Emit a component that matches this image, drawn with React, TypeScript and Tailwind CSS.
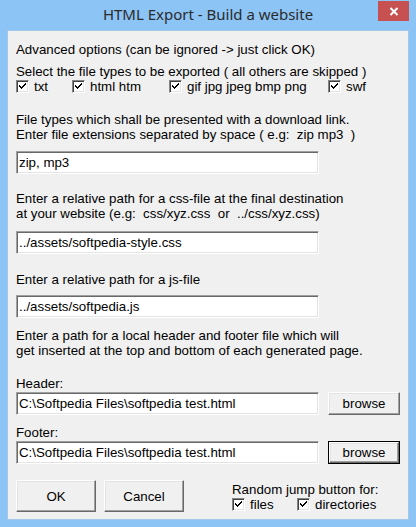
import React from 'react';

const font = { fontFamily: '"Liberation Sans", Arial, sans-serif' };

const Check: React.FC = () => (
  <span className="inline-flex w-[13px] h-[13px] shrink-0 bg-white border border-t-[#848484] border-l-[#848484] border-b-white border-r-white shadow-[inset_1px_1px_0_#404040,inset_-1px_-1px_0_#e3e3e3] items-center justify-center">
    <svg width="9" height="9" viewBox="0 0 9 9" shapeRendering="crispEdges">
      <path d="M1 3h1v1h1v1h1V4h1V3h1V2h1V1h1v2H7v1H6v1H5v1H4v1H3V6H2V5H1z" fill="#000" />
    </svg>
  </span>
);

const CheckItem: React.FC<{ label: string; className?: string }> = ({ label, className = '' }) => (
  <div className={`flex items-center gap-[5px] ${className}`}>
    <Check />
    <span>{label}</span>
  </div>
);

const Field: React.FC<{ value: string }> = ({ value }) => (
  <div className="w-[303px] h-[23px] bg-white border border-t-[#a0a0a0] border-l-[#a0a0a0] border-b-white border-r-white shadow-[inset_1px_1px_0_#696969,inset_-1px_-1px_0_#e3e3e3] flex items-center pl-[2px] whitespace-nowrap">
    {value}
  </div>
);

const WinButton: React.FC<{ label: string; className?: string; isDefault?: boolean }> = ({
  label,
  className = '',
  isDefault = false,
}) => (
  <div className={`${isDefault ? 'border border-[#000]' : ''} ${className}`}>
    <div className="w-full h-full bg-[#f0f0f0] border border-t-white border-l-white border-b-[#696969] border-r-[#696969] shadow-[inset_-1px_-1px_0_#a0a0a0,inset_1px_1px_0_#e3e3e3] flex items-center justify-center">
      {label}
    </div>
  </div>
);

export default function App() {
  return (
    <div className="w-[416px] h-[527px] bg-[#8cc4f5] flex flex-col overflow-hidden" style={font}>
      {/* title bar */}
      <div className="relative h-[30px] shrink-0 flex items-center justify-center">
        <span className="text-[15px] text-[#2b2b2b] pb-[1px]" style={{ fontFamily: '"Noto Sans", "Open Sans", sans-serif' }}>
          HTML Export - Build a website
        </span>
        <div className="absolute top-[1px] right-[7px] w-[31px] h-[20px] bg-[#c75050] flex items-center justify-center">
          <svg width="10" height="9" viewBox="0 0 10 9">
            <path d="M1.5 1 L8.5 8 M8.5 1 L1.5 8" stroke="#fff" strokeWidth="2" />
          </svg>
        </div>
      </div>

      {/* client area */}
      <div className="mx-[7px] mb-[7px] flex-1 bg-[#f0f0f0] border border-[#a3c7e8] pl-[8px] pt-[11px] text-[13.3px] leading-[15px] text-black">
        <div>Advanced options (can be ignored -&gt; just click OK)</div>

        <div className="mt-[7px]">Select the file types to be exported ( all others are skipped )</div>
        <div className="flex h-[15px] items-center">
          <CheckItem label="txt" className="w-[56px]" />
          <CheckItem label="html htm" className="w-[97px]" />
          <CheckItem label="gif jpg jpeg bmp png" className="w-[159px]" />
          <CheckItem label="swf" />
        </div>

        <div className="mt-[18px]">File types which shall be presented with a download link.</div>
        <div>Enter file extensions separated by space ( e.g:&nbsp; zip mp3&nbsp; )</div>
        <div className="mt-[9px]">
          <Field value="zip, mp3" />
        </div>

        <div className="mt-[17px]">Enter a relative path for a css-file at the final destination</div>
        <div>at your website (e.g:&nbsp; css/xyz.css&nbsp; or&nbsp; ../css/xyz.css)</div>
        <div className="mt-[10px]">
          <Field value="../assets/softpedia-style.css" />
        </div>

        <div className="mt-[18px]">Enter a relative path for a js-file</div>
        <div className="mt-[8px]">
          <Field value="../assets/softpedia.js" />
        </div>

        <div className="mt-[10px]">Enter a path for a local header and footer file which will</div>
        <div>get inserted at the top and bottom of each generated page.</div>

        <div className="mt-[18px]">Header:</div>
        <div className="flex items-start gap-[9px] mt-[1px]">
          <Field value="C:\Softpedia Files\softpedia test.html" />
          <WinButton label="browse" className="w-[72px] h-[23px]" />
        </div>

        <div className="mt-[10px]">Footer:</div>
        <div className="flex items-start gap-[9px] mt-[1px]">
          <Field value="C:\Softpedia Files\softpedia test.html" />
          <WinButton label="browse" className="w-[72px] h-[23px]" isDefault />
        </div>

        <div className="flex mt-[16px]">
          <WinButton label="OK" className="w-[80px] h-[32px]" />
          <WinButton label="Cancel" className="w-[80px] h-[32px] ml-[8px]" />
          <div className="ml-[48px] pt-[2px]">
            <div>Random jump button for:</div>
            <div className="flex h-[15px] items-center">
              <CheckItem label="files" className="w-[65px]" />
              <CheckItem label="directories" />
            </div>
          </div>
        </div>
      </div>
    </div>
  );
}
